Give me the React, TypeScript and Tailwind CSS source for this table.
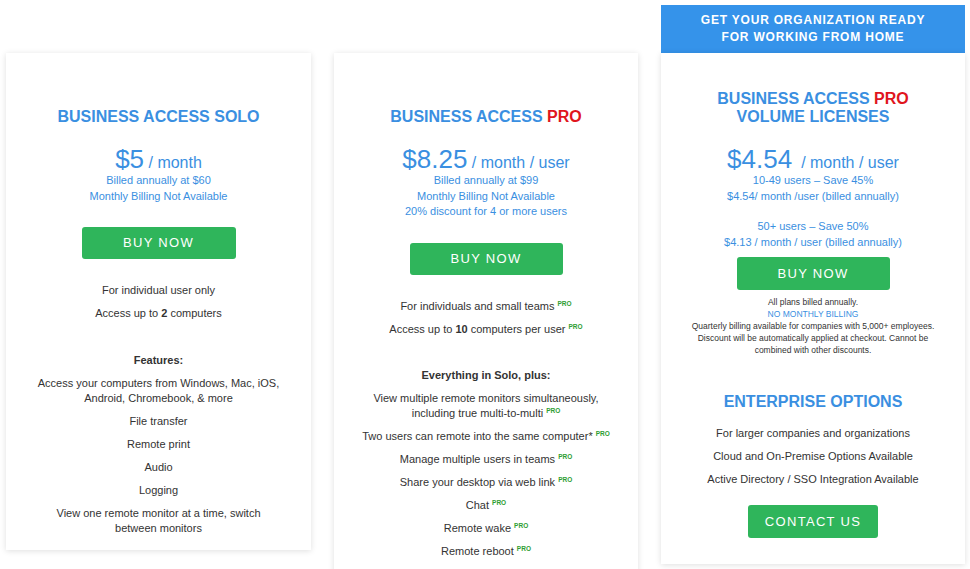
import React from "react";

const Pro = () => (
  <sup className="text-[6.5px] font-bold text-[#2f9e33]">PRO</sup>
);

const Item = ({ children, className = "" }: { children: React.ReactNode; className?: string }) => (
  <p className={"text-[11px] leading-[15px] text-[#333]" + " " + className}>{children}</p>
);

const Button = ({ children, className = "" }: { children: React.ReactNode; className?: string }) => (
  <div
    className={
      "mx-auto flex items-center justify-center rounded-[3px] bg-[#2fb55b] text-[13px] tracking-[1.3px] text-white " +
      className
    }
  >
    {children}
  </div>
);

const Price = ({ amount, unit, gap = false }: { amount: string; unit: string; gap?: boolean }) => (
  <div className="mt-[20px] text-[26px] leading-[26px] text-[#3a8fe1]">
    <span>{amount}</span>
    <span className={"text-[16px] leading-[16px] " + (gap ? "ml-[9px]" : "")}>{gap ? unit : " " + unit}</span>
  </div>
);

export default function App() {
  return (
    <div className="min-h-[569px] bg-white font-['Liberation_Sans',Arial,sans-serif]">
      <div className="flex items-start gap-[23px] pl-[6px] pt-[5px]">
        {/* Card 1 */}
        <div className="mt-[48px] w-[305px] bg-white pb-[14px] pt-[55px] text-center shadow-[0_1px_6px_rgba(0,0,0,0.13)]">
          <h2 className="text-[16px] font-bold leading-[18px] text-[#3a8fe1]">BUSINESS ACCESS SOLO</h2>
          <Price amount="$5" unit="/ month" />
          <div className="text-[11px] leading-[16px] text-[#3a8fe1]">
            <p>Billed annually at $60</p>
            <p>Monthly Billing Not Available</p>
          </div>
          <Button className="mt-[23px] h-[32px] w-[154px]">BUY NOW</Button>
          <div className="mt-[24px] flex flex-col gap-[8px] px-[10px]">
            <Item>For individual user only</Item>
            <Item>
              Access up to <b>2</b> computers
            </Item>
            <Item className="mt-[24px] font-bold">Features:</Item>
            <Item>
              Access your computers from Windows, Mac, iOS,
              <br />
              Android, Chromebook, &amp; more
            </Item>
            <Item>File transfer</Item>
            <Item>Remote print</Item>
            <Item>Audio</Item>
            <Item>Logging</Item>
            <Item>
              View one remote monitor at a time, switch
              <br />
              between monitors
            </Item>
          </div>
        </div>

        {/* Card 2 */}
        <div className="mt-[48px] w-[304px] bg-white pb-[30px] pt-[55px] text-center shadow-[0_1px_6px_rgba(0,0,0,0.13)]">
          <h2 className="text-[16px] font-bold leading-[18px] text-[#3a8fe1]">
            BUSINESS ACCESS <span className="text-[#e0151d]">PRO</span>
          </h2>
          <Price amount="$8.25" unit="/ month / user" />
          <div className="text-[11px] leading-[15.5px] text-[#3a8fe1]">
            <p className="leading-[16px]">Billed annually at $99</p>
            <p className="leading-[16px]">Monthly Billing Not Available</p>
            <p>20% discount for 4 or more users</p>
          </div>
          <Button className="mt-[23px] h-[32px] w-[153px]">BUY NOW</Button>
          <div className="mt-[24px] flex flex-col gap-[8px] px-[10px]">
            <Item>
              For individuals and small teams <Pro />
            </Item>
            <Item>
              Access up to <b>10</b> computers per user <Pro />
            </Item>
            <Item className="mt-[23px] font-bold">Everything in Solo, plus:</Item>
            <Item>
              View multiple remote monitors simultaneously,
              <br />
              including true multi-to-multi <Pro />
            </Item>
            <Item>
              Two users can remote into the same computer* <Pro />
            </Item>
            <Item>
              Manage multiple users in teams <Pro />
            </Item>
            <Item>
              Share your desktop via web link <Pro />
            </Item>
            <Item>
              Chat <Pro />
            </Item>
            <Item>
              Remote wake <Pro />
            </Item>
            <Item>
              Remote reboot <Pro />
            </Item>
          </div>
        </div>

        {/* Card 3 */}
        <div className="w-[304px] text-center">
          <div className="flex h-[48px] flex-col items-center justify-center bg-[#3593ea] text-[12px] font-bold leading-[17px] tracking-[0.8px] text-white">
            <p>GET YOUR ORGANIZATION READY</p>
            <p>FOR WORKING FROM HOME</p>
          </div>
          <div className="bg-white pb-[26px] pt-[37px] shadow-[0_1px_6px_rgba(0,0,0,0.13)]">
            <h2 className="text-[16px] font-bold leading-[18px] text-[#3a8fe1]">
              BUSINESS ACCESS <span className="text-[#e0151d]">PRO</span>
              <br />
              VOLUME LICENSES
            </h2>
            <Price amount="$4.54" unit="/ month / user" gap />
            <div className="text-[11px] leading-[16px] text-[#3a8fe1]">
              <p>10-49 users – Save 45%</p>
              <p>$4.54/ month /user (billed annually)</p>
              <p className="mt-[14px]">50+ users – Save 50%</p>
              <p>$4.13 / month / user (billed annually)</p>
            </div>
            <Button className="mt-[7px] h-[33px] w-[153px]">BUY NOW</Button>
            <div className="mt-[6px] text-[8.5px] leading-[12px] text-[#333]">
              <p>All plans billed annually.</p>
              <p className="text-[#3a8fe1]">NO MONTHLY BILLING</p>
              <p>
                Quarterly billing available for companies with 5,000+ employees.
                <br />
                Discount will be automatically applied at checkout. Cannot be
                <br />
                combined with other discounts.
              </p>
            </div>
            <h2 className="mt-[36px] text-[16px] font-bold leading-[20px] text-[#3a8fe1]">ENTERPRISE OPTIONS</h2>
            <div className="mt-[14px] flex flex-col gap-[8px]">
              <Item>For larger companies and organizations</Item>
              <Item>Cloud and On-Premise Options Available</Item>
              <Item>Active Directory / SSO Integration Available</Item>
            </div>
            <Button className="mt-[18px] h-[33px] w-[130px]">CONTACT US</Button>
          </div>
        </div>
      </div>
    </div>
  );
}
